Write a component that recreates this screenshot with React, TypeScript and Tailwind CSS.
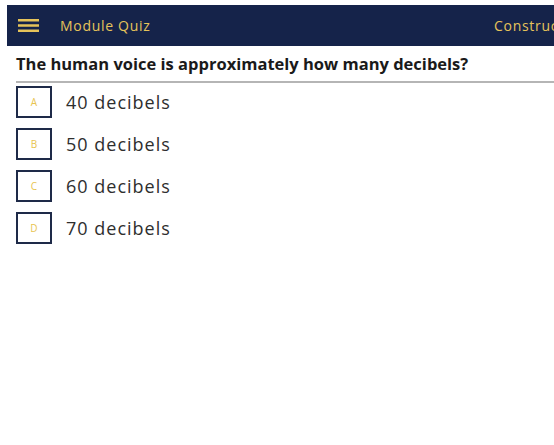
export default function App() {
  const options = [
    { letter: "A", text: "40 decibels" },
    { letter: "B", text: "50 decibels" },
    { letter: "C", text: "60 decibels" },
    { letter: "D", text: "70 decibels" },
  ];

  return (
    <div
      className="h-[445px] w-[554px] overflow-hidden bg-white pt-[5px]"
      style={{ fontFamily: "'Open Sans', 'Noto Sans', sans-serif" }}
    >
      <header className="ml-[7px] flex h-[41px] items-center overflow-hidden whitespace-nowrap bg-[#15234a]">
        <svg width="21" height="13" viewBox="0 0 21 13" className="ml-[11px] shrink-0">
          <rect x="0" y="0" width="21" height="2.5" fill="#e6c35a" />
          <rect x="0" y="5.25" width="21" height="2.5" fill="#e6c35a" />
          <rect x="0" y="10.5" width="21" height="2.5" fill="#e6c35a" />
        </svg>
        <span className="ml-[21px] w-[434px] shrink-0 text-[14px] tracking-[0.7px] text-[#e6c35a]">
          Module Quiz
        </span>
        <span className="shrink-0 text-[14px] tracking-[0.7px] text-[#e6c35a]">Construction</span>
      </header>

      <div className="pl-[16px]">
        <h1 className="mt-[7px] text-[16.5px] font-bold leading-[22px] text-[#1a1a1a]">
          The human voice is approximately how many decibels?
        </h1>
        <div className="mt-[6px] h-[2px] bg-[#b5b5b5]" />

        <ul className="mt-[3px] flex flex-col gap-[10px]">
          {options.map((o) => (
            <li key={o.letter} className="flex items-center">
              <div className="flex h-[32px] w-[36px] shrink-0 items-center justify-center border-2 border-[#1e2a48] text-[10px] text-[#e8c450]">
                {o.letter}
              </div>
              <span className="ml-[14px] text-[18px] tracking-[1px] text-[#2e2e2e]">{o.text}</span>
            </li>
          ))}
        </ul>
      </div>
    </div>
  );
}
